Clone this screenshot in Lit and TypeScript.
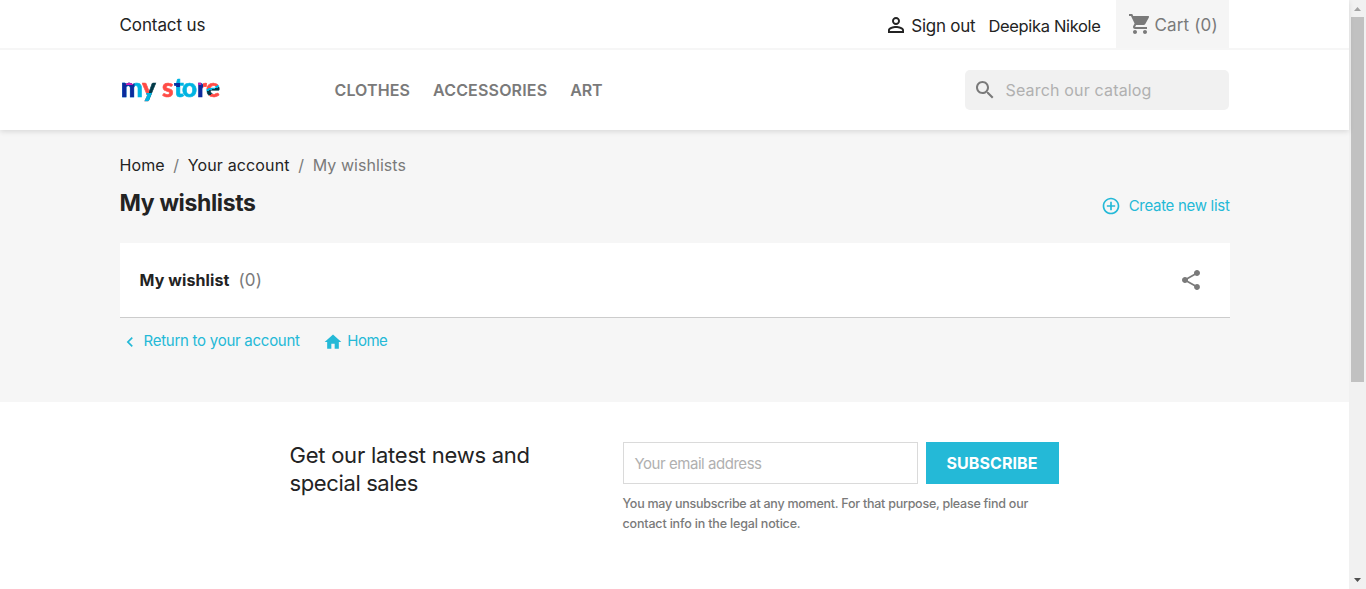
import { LitElement, html, css, svg } from "lit";
import { customElement } from "lit/decorators.js";

const P = {
  person: "M12 5.9a2.1 2.1 0 1 1 0 4.2 2.1 2.1 0 0 1 0-4.2m0 9c2.97 0 6.1 1.46 6.1 2.1v1.1H5.9V17c0-.64 3.13-2.1 6.1-2.1M12 4C9.79 4 8 5.79 8 8s1.79 4 4 4 4-1.79 4-4-1.79-4-4-4zm0 9c-2.67 0-8 1.34-8 4v3h16v-3c0-2.66-5.33-4-8-4z",
  cart: "M7 18c-1.1 0-1.99.9-1.99 2S5.9 22 7 22s2-.9 2-2-.9-2-2-2zM1 2v2h2l3.6 7.59-1.35 2.45c-.16.28-.25.61-.25.96 0 1.1.9 2 2 2h12v-2H7.42c-.14 0-.25-.11-.25-.25l.03-.12.9-1.63h7.45c.75 0 1.41-.41 1.75-1.03l3.58-6.49A1 1 0 0 0 20 4H5.21l-.94-2H1zm16 16c-1.1 0-1.99.9-1.99 2s.89 2 1.99 2 2-.9 2-2-.9-2-2-2z",
  search: "M15.5 14h-.79l-.28-.27C15.41 12.59 16 11.11 16 9.5 16 5.91 13.09 3 9.5 3S3 5.91 3 9.5 5.91 16 9.5 16c1.61 0 3.09-.59 4.23-1.57l.27.28v.79l5 4.99L20.49 19l-4.99-5zm-6 0C7.01 14 5 11.99 5 9.5S7.01 5 9.5 5 14 7.01 14 9.5 11.99 14 9.5 14z",
  add: "M13 7h-2v4H7v2h4v4h2v-4h4v-2h-4V7zm-1-5C6.48 2 2 6.48 2 12s4.48 10 10 10 10-4.48 10-10S17.52 2 12 2zm0 18c-4.41 0-8-3.59-8-8s3.59-8 8-8 8 3.59 8 8-3.59 8-8 8z",
  share: "M18 16.08c-.76 0-1.44.3-1.96.77L8.91 12.7c.05-.23.09-.46.09-.7s-.04-.47-.09-.7l7.05-4.11c.54.5 1.25.81 2.04.81 1.66 0 3-1.34 3-3s-1.34-3-3-3-3 1.34-3 3c0 .24.04.47.09.7L8.04 9.81C7.5 9.31 6.79 9 6 9c-1.66 0-3 1.34-3 3s1.34 3 3 3c.79 0 1.5-.31 2.04-.81l7.12 4.16c-.05.21-.08.43-.08.65 0 1.61 1.31 2.92 2.92 2.92s2.92-1.31 2.92-2.92-1.31-2.92-2.92-2.92z",
  left: "M15.41 7.41L14 6l-6 6 6 6 1.41-1.41L10.83 12z",
  home: "M10 20v-6h4v6h5v-8h3L12 3 2 12h3v8z",
};
const icon = (d: string, size: number) =>
  html`<svg class="icon" width=${size} height=${size} viewBox="0 0 24 24">${svg`<path d=${d}></path>`}</svg>`;

@customElement("app-root")
export class AppRoot extends LitElement {
  static styles = css`
    :host { display: flex; width: 100%; height: 589px; overflow: hidden; background: #fff; color: #232323;
      font: 16px/24px Inter, "Noto Sans", sans-serif; }
    * { box-sizing: border-box; }
    .icon { display: block; fill: currentColor; flex: none; }
    .page { flex: 1; min-width: 0; display: flex; flex-direction: column; }
    .wrap { width: 1110px; margin-left: 119.5px; display: flex; }
    header { background: #fff; height: 130px; box-shadow: 0 2px 5px rgba(0,0,0,.11); position: relative; flex: none; }
    .top { height: 50px; border-bottom: 2px solid #f6f6f6; }
    .top .wrap { height: 48px; align-items: center; padding-right: 1px; }
    .t { white-space: nowrap; display: block; flex: none; }
    .grow { flex: 1; }
    .contact { font-size: 17px; letter-spacing: -.1px; padding-top: 2px; }
    .user { display: flex; align-items: center; gap: 3px; padding-top: 2px; }
    .signout { font-size: 17px; letter-spacing: -.24px; padding-top: 1px; }
    .name { padding-top: 3px; margin: 0 15px 0 13px; font-size: 16.5px; letter-spacing: -.34px; }
    .cart { background: #f5f5f5; height: 48px; width: 113px; padding: 0 12px; display: flex; align-items: center; gap: 3px; color: #7a7a7a; }
    .cart .t { padding-top: 2px; font-size: 17px; letter-spacing: .15px; }
    .main { height: 80px; align-items: center; }
    .logo { width: 215px; display: flex; font: 900 26px/30px Lato, sans-serif; padding-left: 1.5px; margin-top: -3px; }
    .logo span { display: block; flex: none; height: 34px; background-repeat: no-repeat; -webkit-background-clip: text; background-clip: text; color: transparent; -webkit-text-stroke: .6px transparent; }
    .lm { width: 22px; margin-right: -1px;
      background-image: linear-gradient(#d41fb0, #d41fb0), linear-gradient(#0c2a9c, #0c2a9c), linear-gradient(#00b4e2, #00b4e2);
      background-size: 7px 13px, 13.5px 100%, 100% 100%; background-position: 5px 0, 0 0, 0 0; }
    .ly { width: 16px; margin-right: 4px;
      background-image: linear-gradient(#00b4e2, #00b4e2), linear-gradient(90deg, #ff4c46 7.5px, #023a48 7.5px);
      background-size: 100% 14px, 100% 100%; background-position: 0 21px, 0 0; }
    .ls { width: 12px; background-image: linear-gradient(#ff4c46, #ff4c46); }
    .lt { width: 10px; margin-right: -2px; background-image: linear-gradient(#0c2a9c, #0c2a9c), linear-gradient(#00b4e2, #00b4e2);
      background-size: 6px 4px, 100% 100%; background-position: 0 11px, 0 0; }
    .lo { width: 15px; background-image: linear-gradient(#00b4e2, #00b4e2); }
    .lr { width: 10.5px; margin-right: -1.5px; background-image: linear-gradient(#d41fb0, #d41fb0), linear-gradient(90deg, #0c2a9c 6px, #ff4c46 6px);
      background-size: 4px 13px, 100% 100%; background-position: 0 0, 0 0; }
    .le { width: 15px; background-image: linear-gradient(160deg, #ff4c46 44%, #00b4e2 44%, #00b4e2 50%, #023a48 50%, #023a48 62%, #ff4c46 62%); }
    nav { display: flex; gap: 23px; color: #7a7a7a; font-weight: 600; }
    .n1 { letter-spacing: .1px; }
    .n2 { letter-spacing: .18px; }
    .n3 { letter-spacing: -.2px; }
    .search { width: 264px; height: 40px; border-radius: 5px; background: #f1f1f1; margin-right: 1px; display: flex; align-items: center; padding-left: 8px; gap: 9px; color: #7a7a7a; }
    .ph { color: #b0b0b0; }
    .search .ph { letter-spacing: .17px; }
    main { background: #f6f6f6; height: 272px; padding-top: 23px; flex: none; }
    .crumbs { gap: 8.6px; }
    .c1 { letter-spacing: .1px; }
    .c2 { letter-spacing: .15px; }
    .c3 { letter-spacing: .06px; }
    .muted { color: #7a7a7a; }
    .title { height: 64px; padding-top: 20px; margin-top: -7px; }
    h1 { margin: 0; font-size: 23px; line-height: 26px; font-weight: 700; letter-spacing: -.36px; }
    .link { color: #24b9d7; font-size: 15px; display: flex; align-items: center; }
    .create { margin-left: auto; gap: 8px; height: 24px; margin-top: 4px; letter-spacing: -.3px; }
    .card { height: 75px; background: #fff; border-bottom: 1px solid #ccc; margin-top: 9px; align-items: center; padding: 0 26.5px 0 20px; }
    .card b { font-weight: 700; margin-right: 9px; letter-spacing: .1px; }
    .count { font-size: 17px; letter-spacing: .2px; }
    .share { margin-left: auto; color: #7a7a7a; }
    .links { padding-top: 11px; gap: 23.5px; }
    .links .link { gap: 4px; }
    .links .icon { margin-top: 2px; }
    .back { letter-spacing: -.26px; }
    .home { letter-spacing: -.5px; }
    .news { padding-top: 40px; display: flex; margin-left: 289.5px; }
    .news h2 { margin: -1px 0 0; width: 333px; font-size: 22px; font-weight: 400; line-height: 28px; letter-spacing: -.24px; }
    .h2b { letter-spacing: -.38px; }
    .form { display: flex; gap: 8px; }
    .mail { width: 295px; height: 42px; border: 1px solid #dadada; padding: 2px 11px 0; display: flex; align-items: center; font-size: 15px; letter-spacing: -.46px; }
    .btn { width: 133px; height: 42px; background: #24b9d7; color: #fff; font-weight: 700; letter-spacing: .08px; display: flex; align-items: center; justify-content: center; }
    .note { font-size: 12.5px; line-height: 20px; color: #7a7a7a; padding-top: 9.5px; font-weight: 500; letter-spacing: -.25px; }
    .note2 { letter-spacing: -.17px; }
    .bar { width: 17px; background: #f1f1f1; display: flex; flex-direction: column; align-items: center; flex: none; }
    .thumb { width: 13px; height: 365px; background: #c1c1c1; margin-bottom: auto; }
  `;
  render() {
    return html`
      <div class="page">
        <header>
          <div class="top"><div class="wrap">
            <span class="t contact">Contact us</span><span class="grow"></span>
            <span class="user">${icon(P.person, 24)}<span class="t signout">Sign out</span></span>
            <span class="t name">Deepika Nikole</span>
            <span class="cart">${icon(P.cart, 24)}<span class="t">Cart (0)</span></span>
          </div></div>
          <div class="wrap main">
            <div class="logo"><span class="lm">m</span><span class="ly">y</span><span class="ls">s</span><span class="lt">t</span><span class="lo">o</span><span class="lr">r</span><span class="le">e</span></div>
            <nav><span class="t n1">CLOTHES</span><span class="t n2">ACCESSORIES</span><span class="t n3">ART</span></nav>
            <span class="grow"></span>
            <div class="search">${icon(P.search, 24)}<span class="t ph">Search our catalog</span></div>
          </div>
        </header>
        <main>
          <div class="wrap crumbs"><span class="t c1">Home</span><span class="muted">/</span><span class="t c2">Your account</span><span class="muted">/</span><span class="t c3 muted">My wishlists</span></div>
          <div class="wrap title"><h1 class="t">My wishlists</h1><span class="link create">${icon(P.add, 20)}<span class="t">Create new list</span></span></div>
          <div class="wrap card"><b class="t">My wishlist</b><span class="t count muted">(0)</span><span class="share">${icon(P.share, 24)}</span></div>
          <div class="wrap links"><span class="link back">${icon(P.left, 20)}<span class="t">Return to your account</span></span><span class="link home">${icon(P.home, 20)}<span class="t">Home</span></span></div>
        </main>
        <section class="news">
          <h2><span class="t">Get our latest news and</span><span class="t h2b">special sales</span></h2>
          <div><div class="form"><div class="mail"><span class="t ph">Your email address</span></div><div class="btn"><span class="t">SUBSCRIBE</span></div></div>
          <div class="note"><span class="t">You may unsubscribe at any moment. For that purpose, please find our</span><span class="t note2">contact info in the legal notice.</span></div></div>
        </section>
      </div>
      <div class="bar">
        <svg width="17" height="17"><path d="M5 11h7L8.5 7z" fill="#a3a3a3"></path></svg>
        <div class="thumb"></div>
        <svg width="17" height="17"><path d="M5 6h7L8.5 10z" fill="#505050"></path></svg>
      </div>`;
  }
}
